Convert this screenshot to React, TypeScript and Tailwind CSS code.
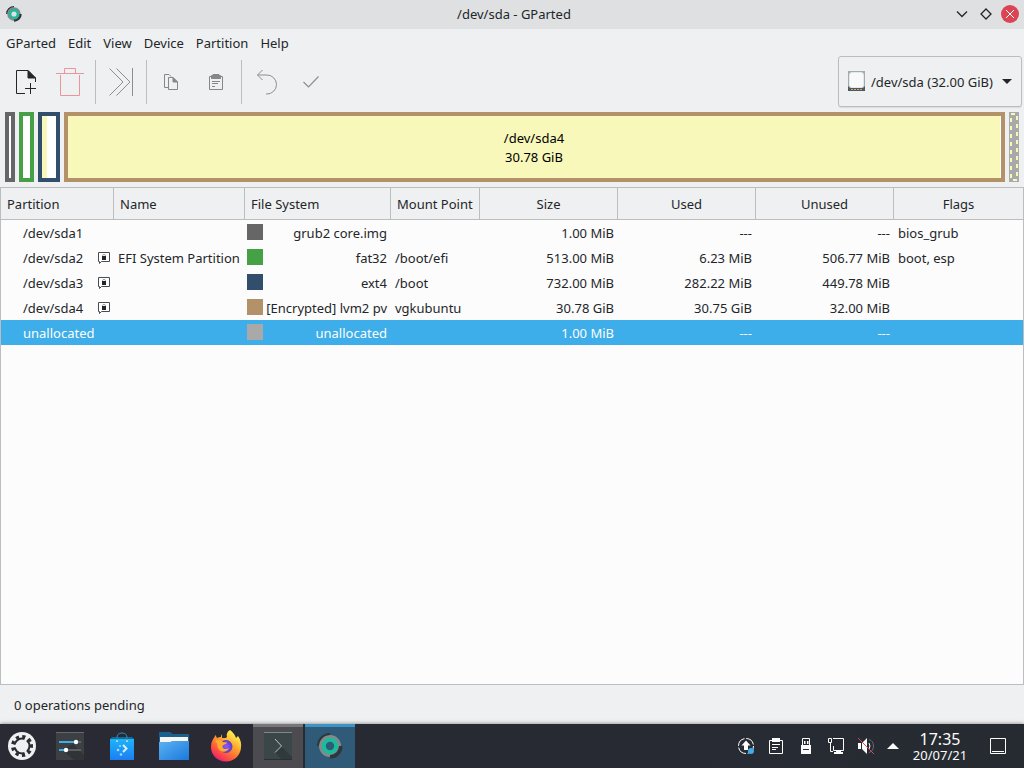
import React from "react";

type Partition = {
  id: string;
  locked?: boolean;
  name: string;
  color: string;
  fs: string;
  mount: string;
  size: string;
  used: string;
  unused: string;
  flags: string;
  selected?: boolean;
};

const menus = ["GParted", "Edit", "View", "Device", "Partition", "Help"];

const columns = [
  { label: "Partition", width: "w-[113px]", align: "text-left" },
  { label: "Name", width: "w-[131px]", align: "text-left" },
  { label: "File System", width: "w-[146px]", align: "text-left" },
  { label: "Mount Point", width: "w-[89px]", align: "text-left" },
  { label: "Size", width: "w-[138px]", align: "text-center" },
  { label: "Used", width: "w-[138px]", align: "text-center" },
  { label: "Unused", width: "w-[138px]", align: "text-center" },
  { label: "Flags", width: "", align: "text-center" },
];

const partitions: Partition[] = [
  {
    id: "/dev/sda1",
    name: "",
    color: "bg-[#666666]",
    fs: "grub2 core.img",
    mount: "",
    size: "1.00 MiB",
    used: "---",
    unused: "---",
    flags: "bios_grub",
  },
  {
    id: "/dev/sda2",
    locked: true,
    name: "EFI System Partition",
    color: "bg-[#46a046]",
    fs: "fat32",
    mount: "/boot/efi",
    size: "513.00 MiB",
    used: "6.23 MiB",
    unused: "506.77 MiB",
    flags: "boot, esp",
  },
  {
    id: "/dev/sda3",
    locked: true,
    name: "",
    color: "bg-[#314e6c]",
    fs: "ext4",
    mount: "/boot",
    size: "732.00 MiB",
    used: "282.22 MiB",
    unused: "449.78 MiB",
    flags: "",
  },
  {
    id: "/dev/sda4",
    locked: true,
    name: "",
    color: "bg-[#b39169]",
    fs: "[Encrypted] lvm2 pv",
    mount: "vgkubuntu",
    size: "30.78 GiB",
    used: "30.75 GiB",
    unused: "32.00 MiB",
    flags: "",
  },
  {
    id: "unallocated",
    name: "",
    color: "bg-[#a9a9a9]",
    fs: "unallocated",
    mount: "",
    size: "1.00 MiB",
    used: "---",
    unused: "---",
    flags: "",
    selected: true,
  },
];

const GPartedIcon = ({ className }: { className: string }) => (
  <svg viewBox="0 0 26 26" className={className} fill="none">
    <circle cx="13" cy="13" r="9" stroke="#7f8c8d" strokeWidth="4" />
    <path d="M1 13A12 12 0 0 1 13 1" stroke="#31363b" strokeWidth="2" />
    <path d="M22 13H25.5A12 12 0 0 1 13 25.5V22A9 9 0 0 0 22 13Z" fill="#31363b" />
    <circle cx="13" cy="13" r="6.2" stroke="#1abc9c" strokeWidth="4" />
  </svg>
);

const LockIcon = () => (
  <svg viewBox="0 0 12 12" className="h-3 w-3" fill="none" aria-label="in use">
    <path d="M1.5 9.5H.5V.5H11.5V9.5H3.5L1.5 11.5Z" fill="#fff" stroke="#4a4d50" />
    <path d="M4.5 5V3.5Q4.5 2.500 6 2.500T7.500 3.500V5" stroke="#999" />
    <path d="M4 4H8V8H4Z" fill="#232629" />
  </svg>
);

const ToolButton = ({
  label,
  disabled,
  children,
}: {
  label: string;
  disabled?: boolean;
  children: React.ReactNode;
}) => (
  <button
    type="button"
    aria-label={label}
    disabled={disabled}
    className="flex h-11 w-11 items-center justify-center"
  >
    {children}
  </button>
);

const Separator = () => <div className="mx-[3px] h-11 w-px bg-[#bcbdbf]" />;

const TitleBar = () => (
  <header className="grid h-[29px] grid-cols-[1fr_auto_1fr] items-center bg-[#dee0e2] pr-0.5 pb-px pl-1.5">
    <GPartedIcon className="h-4 w-4" />
    <h1>/dev/sda - GParted</h1>
    <div className="flex justify-end">
      <button type="button" aria-label="Minimize" className="flex h-6 w-6 items-center justify-center">
        <svg viewBox="0 0 18 18" className="h-[18px] w-[18px]" fill="none" stroke="#232629" strokeWidth="1.3">
          <path d="M4 6.5L9 11.5L14 6.5" />
        </svg>
      </button>
      <button type="button" aria-label="Maximize" className="flex h-6 w-6 items-center justify-center">
        <svg viewBox="0 0 18 18" className="h-[18px] w-[18px]" fill="none" stroke="#232629" strokeWidth="1.3">
          <path d="M9 4L14 9L9 14L4 9Z" />
        </svg>
      </button>
      <button type="button" aria-label="Close" className="flex h-6 w-6 items-center justify-center">
        <svg viewBox="0 0 18 18" className="h-[18px] w-[18px]" fill="none">
          <circle cx="9" cy="9" r="9" fill="#da4453" />
          <path d="M5 5L13 13M13 5L5 13" stroke="#fcfcfc" />
        </svg>
      </button>
    </div>
  </header>
);

const Toolbar = () => (
  <div className="flex h-[51px] items-center pr-0.5 pl-1">
    <ToolButton label="New">
      <svg viewBox="0 0 22 26" className="h-[26px] w-[22px]" fill="none" stroke="#232629">
        <path d="M10 24.5H1.5V1.5H13L20.5 9V13" />
        <path d="M13 1.5L20.5 9H13Z" fill="#232629" />
        <path d="M15.5 14V25M10 19.5H21" />
      </svg>
    </ToolButton>
    <ToolButton label="Delete" disabled>
      <svg viewBox="0 0 28 28" className="h-7 w-7" fill="none" stroke="#ea959c">
        <path d="M0 5.5H28M8.5 5V.5H19.5V5M4.5 7V27.5H23.5V7" />
      </svg>
    </ToolButton>
    <Separator />
    <ToolButton label="Resize/Move" disabled>
      <svg viewBox="0 0 24 28" className="h-7 w-6" fill="none" stroke="#8c8e90">
        <path d="M.5 .5L14 14L.5 27.5M7.5 .5L21 14L7.5 27.5M23.5 0V28" />
      </svg>
    </ToolButton>
    <Separator />
    <ToolButton label="Copy" disabled>
      <svg viewBox="0 0 16 16" className="h-4 w-4" fill="none" stroke="#85878a">
        <path d="M4 13.5H.5V.5H5L7 2.5" />
        <path d="M4.5 3.5H9L13.5 8V15.5H4.5Z" />
        <path d="M9 3.5V8H13.5Z" fill="#85878a" />
      </svg>
    </ToolButton>
    <ToolButton label="Paste" disabled>
      <svg viewBox="0 0 16 16" className="h-4 w-4" fill="none" stroke="#85878a">
        <path d="M3 2.5H1.5V15.5H14.5V2.5H13" />
        <path d="M3.5 1.5H5V.5H11V1.5H12.5V4.5H3.5Z" fill="#85878a" />
        <path d="M4 7.5H12M4 9.5H10M4 12.5H7" />
      </svg>
    </ToolButton>
    <Separator />
    <ToolButton label="Undo" disabled>
      <svg viewBox="0 0 22 26" className="h-[26px] w-[22px]" fill="none" stroke="#8c8e90">
        <path d="M6.5 1L1.5 6L6.5 11M1.5 6H11A9.5 9.5 0 0 1 11 25H10" />
      </svg>
    </ToolButton>
    <ToolButton label="Apply" disabled>
      <svg viewBox="0 0 16 16" className="h-4 w-4" fill="none" stroke="#8c8e90" strokeWidth="1.2">
        <path d="M.5 8L5.5 13L15.5 2.5" />
      </svg>
    </ToolButton>

    <div className="relative ml-auto">
      <select
        aria-label="Device"
        className="h-[51px] w-[184px] appearance-none rounded-[3px] border border-[#bcbdbf] bg-transparent pl-8 shadow-[0_1px_1px_#00000018]"
      >
        <option>/dev/sda (32.00 GiB)</option>
      </select>
      <svg
        viewBox="0 0 17 20"
        className="pointer-events-none absolute top-[15px] left-2.5 h-5 w-[17px]"
        fill="none"
      >
        <path d="M0 0H17V17H0Z" fill="#a3adb0" />
        <rect x="1.5" y="1.5" width="14" height="15" rx="2.5" fill="#f8f9fa" stroke="#e6e9ea" />
        <path d="M0 15L2 17H15L17 15V20H0Z" fill="#4d5a60" />
        <path d="M3 18.5H14" stroke="#e8a25c" strokeDasharray="2 1" />
      </svg>
      <svg
        viewBox="0 0 10 5"
        className="pointer-events-none absolute top-[23px] right-2.5 h-[5px] w-2.5"
        fill="#232629"
      >
        <path d="M0 0H10L5 5Z" />
      </svg>
    </div>
  </div>
);

const DiskMap = () => (
  <div className="flex gap-1 p-[5px] text-black">
    <div className="h-[70px] w-2.5 border-4 border-[#666666] bg-white" />
    <div className="h-[70px] w-[15px] border-4 border-[#46a046] bg-white" />
    <div className="h-[70px] w-[22px] border-4 border-[#314e6c] bg-white">
      <div className="h-full w-[5px] bg-[#f8f8ba]" />
    </div>
    <div className="flex h-[70px] flex-1 border-4 border-[#b39169] bg-white pr-px">
      <div className="flex flex-1 flex-col items-center justify-center bg-[#f8f8ba] pt-0.5 leading-[19px]">
        <span>/dev/sda4</span>
        <span>30.78 GiB</span>
      </div>
    </div>
    <svg viewBox="0 0 10 70" className="h-[70px] w-2.5" fill="none">
      <path d="M0 0H10V70H0Z" fill="#a9a9a9" />
      <path d="M2 2H8V68H2Z" stroke="#f8f8ba" strokeWidth="2" strokeDasharray="4 4" />
    </svg>
  </div>
);

const PartitionTable = () => (
  <main className="flex-1 border border-[#bcbdbf] bg-[#fcfcfc]">
    <table className="w-full table-fixed border-separate border-spacing-0 whitespace-nowrap">
      <thead className="bg-[#eff0f1]">
        <tr>
          {columns.map((col) => (
            <th
              key={col.label}
              scope="col"
              className={`h-8 border-r border-b border-[#bcbdbf] px-1.5 font-normal last:border-r-0 ${col.width} ${col.align}`}
            >
              {col.label}
            </th>
          ))}
        </tr>
      </thead>
      <tbody>
        {partitions.map((p) => (
          <tr key={p.id} className={p.selected ? "bg-[#3daee9] text-[#fcfcfc]" : ""}>
            <td className="h-[25px] pr-1 pl-[22px]">
              <div className="flex items-center justify-between">
                {p.id}
                {p.locked && <LockIcon />}
              </div>
            </td>
            <td className="px-1">{p.name}</td>
            <td className="pr-1 pl-0.5">
              <div className="flex justify-between">
                <span className={`mt-px h-4 w-4 shrink-0 ${p.color}`} />
                {p.fs}
              </div>
            </td>
            <td className="px-1">{p.mount}</td>
            <td className="px-1 text-right">{p.size}</td>
            <td className="px-1 text-right">{p.used}</td>
            <td className="px-1 text-right">{p.unused}</td>
            <td className="px-1">{p.flags}</td>
          </tr>
        ))}
      </tbody>
    </table>
  </main>
);

const launchers = [
  {
    name: "Application Launcher",
    tile: "w-[43px]",
    icon: (
      <svg viewBox="0 0 28 28" className="h-7 w-7" fill="none">
        <circle cx="14" cy="14" r="14" fill="#eff0f1" />
        <circle cx="14" cy="14" r="7.5" stroke="#2a2b34" strokeWidth="2" />
        {/* gear teeth */}
        <circle
          cx="14"
          cy="14"
          r="9.5"
          stroke="#2a2b34"
          strokeWidth="3"
          strokeDasharray="3.3 3.333"
          transform="rotate(-10 14 14)"
        />
        <path d="M3 14H8M19.500 4.500L17 8.800M19.500 23.500L17 19.200" stroke="#eff0f1" strokeWidth="2.500" />
      </svg>
    ),
  },
  {
    name: "System Settings",
    tile: "w-[50px]",
    icon: (
      <svg viewBox="0 0 28 28" className="h-7 w-7" fill="none">
        <path d="M0 0H28V28H0Z" fill="#3c4043" />
        <path d="M17 12L28 23V28H18L6 18Z" fill="#303437" />
        <path d="M0 .5H28" stroke="#65696c" />
        <path d="M20 10H25M10 18H25" stroke="#5c6063" strokeWidth="2" />
        <path d="M3 10H20M3 18H10" stroke="#3daee9" strokeWidth="2" />
        <circle cx="20" cy="10" r="2.2" fill="#fff" />
        <circle cx="10" cy="18" r="2.2" fill="#fff" />
      </svg>
    ),
  },
  {
    name: "Discover",
    tile: "w-[50px]",
    icon: (
      <svg viewBox="0 0 24 28" className="h-7 w-6" fill="none">
        <defs>
          <linearGradient id="bag" x1="0" y1="0" x2="0" y2="1">
            <stop stopColor="#1cb5fb" />
            <stop offset="1" stopColor="#1d7df2" />
          </linearGradient>
        </defs>
        <path d="M2 5H22L24 7H0Z" fill="#166a96" />
        <path d="M0 7H24V28H0Z" fill="url(#bag)" />
        <path d="M7 9V6Q7 1 12 1T17 6V9" stroke="#2c8fbd" />
        <circle cx="7" cy="9" r="1" fill="#b9e5fb" />
        <circle cx="17" cy="9" r="1" fill="#b9e5fb" />
        <path d="M13 13L16.5 16.5L13 20" stroke="#d8f0fd" strokeWidth="2" />
        <circle cx="10" cy="14" r="1" fill="#a5d9fb" />
        <circle cx="8" cy="18" r="1.3" fill="#a5d9fb" />
        <circle cx="11" cy="22.5" r="1.3" fill="#a5d9fb" />
      </svg>
    ),
  },
  {
    name: "Dolphin",
    tile: "w-[50px]",
    icon: (
      <svg viewBox="0 0 30 28" className="h-7 w-[30px]" fill="none">
        <defs>
          <linearGradient id="folder" x1="0" y1="0" x2="1" y2="1">
            <stop stopColor="#5cb3f2" />
            <stop offset="1" stopColor="#1a78dd" />
          </linearGradient>
        </defs>
        <path d="M0 0H11L14 2H30V12H0Z" fill="#17608f" />
        <path d="M1 5H29V12H1Z" fill="#f7f5f2" />
        <path d="M0 10H11L13 9H30V28H0Z" fill="url(#folder)" />
      </svg>
    ),
  },
  {
    name: "Firefox",
    tile: "w-[50px]",
    icon: (
      <svg viewBox="0 0 32 32" className="h-8 w-8" fill="none">
        <defs>
          <linearGradient id="fox" x1="0.8" y1="0.1" x2="0.2" y2="1">
            <stop stopColor="#fff44f" />
            <stop offset="0.4" stopColor="#ff9a2b" />
            <stop offset="0.75" stopColor="#ff4a44" />
            <stop offset="1" stopColor="#e31587" />
          </linearGradient>
          <radialGradient id="globe">
            <stop stopColor="#9059ff" />
            <stop offset="1" stopColor="#5b3cc4" />
          </radialGradient>
        </defs>
        <path
          d="M20 0C23 2 25 5 26 8L28 6C31 10 31.5 14 31 18C30 26 24 31.5 16 31.5C7 31.5 1 25 1 17C1 12 3 9 4.5 7L5.5 5L7 8C9 7 10 7 11 7C11 5 12 4.5 12 4.5V8C16 8 16 8 17 7C16 4 18 1 20 0Z"
          fill="url(#fox)"
        />
        <circle cx="16" cy="16.5" r="6.5" fill="url(#globe)" />
        <path d="M5 11C8 9 11 10 13 12L17 12.5C17 14.5 13 14 12.5 16.5C12 19 16 20 19 18C17 23 10 23 8 18C7 15 8 13 5 11Z" fill="#ffac2e" />
      </svg>
    ),
  },
  {
    name: "Konsole",
    tile: "w-[50px] border-t-[3px] border-[#75777b] bg-[#4b4b50] pb-[3px]",
    icon: (
      <svg viewBox="0 0 28 28" className="h-7 w-7" fill="none">
        <path d="M0 0H28V28H0Z" fill="#3b4649" />
        <path d="M17 14L28 25V28H18L11 20Z" fill="#303a3d" />
        <path d="M0 .5H28" stroke="#7b8a8c" />
        <path d="M0 27.5H28" stroke="#273033" />
        <path d="M11 7L17.5 14L11 20.5" stroke="#bdc3c7" />
      </svg>
    ),
  },
  {
    name: "GParted",
    tile: "w-[50px] border-t-[3px] border-[#3c94c6] bg-[#2f5b78] pb-[3px]",
    icon: <GPartedIcon className="h-[26px] w-[26px]" />,
  },
];

const trayIcons = [
  {
    name: "Updates",
    icon: (
      <>
        <circle cx="8" cy="8" r="7.5" stroke="#fcfcfc" strokeDasharray="10 1.78" />
        <path d="M8 2.5L12.5 7.5H10V12H6V7.5H3.5Z" fill="#fcfcfc" />
        <circle cx="13" cy="13" r="3" fill="#3daee9" />
      </>
    ),
  },
  {
    name: "Clipboard",
    icon: (
      <>
        <path d="M1.5 2.5H14.5V15.5H1.5Z" stroke="#fcfcfc" />
        <path d="M4 0H12V4H4Z" fill="#fcfcfc" />
        <path d="M4 6.5H12M4 9.5H10M4 11.5H8" stroke="#fcfcfc" />
      </>
    ),
  },
  {
    name: "Removable devices",
    icon: (
      <>
        <path d="M4.5 7V.5H11.5V7" stroke="#fcfcfc" />
        <path d="M6 3H7.5V6H6ZM9 3H10.5V6H9ZM3 7H13V16H3Z" fill="#fcfcfc" />
        <path d="M5 11.5H11" stroke="#2a2c34" />
      </>
    ),
  },
  {
    name: "Network",
    icon: (
      <>
        <path d="M5 .5H15.5V12.5H5.5V8M.5 .5H3.5V4.5H.5ZM2.5 5V13.5H5" stroke="#fcfcfc" />
        <path d="M8 12H13V14H15V16H6V14H8Z" fill="#fcfcfc" />
      </>
    ),
  },
  {
    name: "Volume muted",
    icon: (
      <>
        <path d="M0 5H3V11H0ZM4 5L9 0V16L4 11Z" fill="#fcfcfc" />
        <path d="M11 5Q13 8 11 11" stroke="#fcfcfc" />
        <path d="M11 1.5Q15.5 3 15.5 8T11 14.5" stroke="#686b70" />
        <path d="M0 0L16 16" stroke="#da4453" />
      </>
    ),
  },
];

const Taskbar = () => (
  <footer className="flex h-11 items-stretch bg-linear-to-r from-[#2a2a34] to-[#262b32] text-[#fcfcfc] shadow-[0_0_4px_#00000080]">
    <nav className="flex gap-0.5">
      {launchers.map((app) => (
        <button
          key={app.name}
          type="button"
          aria-label={app.name}
          className={`flex items-center justify-center ${app.tile}`}
        >
          {app.icon}
        </button>
      ))}
    </nav>
    <div className="ml-auto flex pr-[3px]">
      {trayIcons.map((item) => (
        <button
          key={item.name}
          type="button"
          aria-label={item.name}
          className="flex w-[30px] items-center justify-center"
        >
          <svg viewBox="0 0 16 16" className="h-4 w-4" fill="none">
            {item.icon}
          </svg>
        </button>
      ))}
      <button type="button" aria-label="Show hidden icons" className="flex w-6 items-center justify-center">
        <svg viewBox="0 0 12 6" className="h-1.5 w-3" fill="#fcfcfc">
          <path d="M6 0L12 6H0Z" />
        </svg>
      </button>
      <button type="button" className="flex w-[70px] flex-col items-center justify-center pt-0.5">
        <time className="text-base leading-4">17:35</time>
        <span className="leading-4">20/07/21</span>
      </button>
      <button type="button" aria-label="Show desktop" className="flex w-[46px] items-center justify-center">
        <svg viewBox="0 0 16 16" className="h-4 w-4" fill="none" stroke="#fcfcfc">
          <path d="M.5 .5H15.5V15.5H.5ZM2 13.5H14" />
        </svg>
      </button>
    </div>
  </footer>
);

const App = () => {
  return (
    <div className="flex min-h-screen flex-col bg-[#eff0f1] font-['Noto_Sans',sans-serif] text-[13px] leading-5 text-[#232629]">
      <TitleBar />
      <nav className="flex h-[27px] items-center">
        {menus.map((menu) => (
          <button key={menu} type="button" className="px-1.5">
            {menu}
          </button>
        ))}
      </nav>
      <Toolbar />
      <DiskMap />
      <PartitionTable />
      <div className="flex h-[39px] items-center px-3.5">0 operations pending</div>
      <Taskbar />
    </div>
  );
};

export default App;
